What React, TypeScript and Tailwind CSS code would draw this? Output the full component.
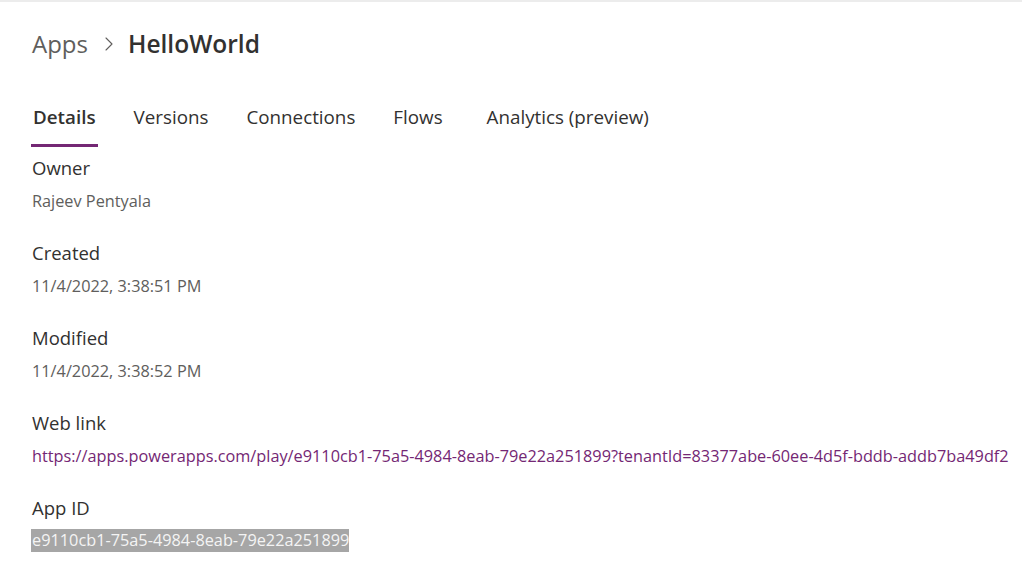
import { ChevronRight } from "lucide-react";

const fields = [
  { label: "Owner", value: "Rajeev Pentyala" },
  { label: "Created", value: "11/4/2022, 3:38:51 PM" },
  { label: "Modified", value: "11/4/2022, 3:38:52 PM" },
];

const tabs = ["Details", "Versions", "Connections", "Flows", "Analytics (preview)"];

export default function App() {
  return (
    <main
      className="min-h-screen bg-white border-t-2 border-[#ececec]"
      style={{ fontFamily: '"Open Sans", "Noto Sans", sans-serif' }}
    >
      {/* Breadcrumb */}
      <div className="flex items-center px-8 pt-[24px] h-[60px]">
        <span className="text-[24px] text-[#605e5c] leading-8">Apps</span>
        <ChevronRight size={24} strokeWidth={1.1} className="text-[#605e5c] ml-[9px] mr-[7px]" />
        <span className="text-[24.5px] font-semibold text-[#323130] leading-8">HelloWorld</span>
      </div>

      {/* Tabs */}
      <nav className="flex px-[31px] mt-[43px] gap-[34px]">
        {tabs.map((t, i) => (
          <div key={t} className={"flex flex-col " + (i === 4 ? "ml-[6px]" : "")}>
            <span
              className={
                "text-[18.8px] leading-6 px-[2px] text-[#323130] " +
                (i === 0 ? "font-semibold" : "")
              }
            >
              {t}
            </span>
            <div className={"h-[3px] mt-[15px] " + (i === 0 ? "bg-[#742774]" : "bg-transparent")} />
          </div>
        ))}
      </nav>

      {/* Details */}
      <section className="px-8 pt-[9px]">
        {fields.map((f) => (
          <div key={f.label} className="h-[85px]">
            <p className="text-[18.5px] leading-6 text-[#323130]">{f.label}</p>
            <p className="text-[16.3px] leading-5 text-[#605e5c] mt-[11px]">{f.value}</p>
          </div>
        ))}
        <div className="h-[85px]">
          <p className="text-[18.5px] leading-6 text-[#323130]">Web link</p>
          <a
            href="#"
            className="block text-[16.3px] leading-5 text-[#742774] mt-[11px] whitespace-nowrap"
          >
            https://apps.powerapps.com/play/e9110cb1-75a5-4984-8eab-79e22a251899?tenantId=83377abe-60ee-4d5f-bddb-addb7ba49df2
          </a>
        </div>
        <div>
          <p className="text-[18.5px] leading-6 text-[#323130]">App ID</p>
          <p className="mt-[8px] -ml-px">
            <span className="text-[16.3px] leading-[23px] inline-block bg-[#a6a6a6] text-[#f4f4f4] pl-px">
              e9110cb1-75a5-4984-8eab-79e22a251899
            </span>
          </p>
        </div>
      </section>
    </main>
  );
}
